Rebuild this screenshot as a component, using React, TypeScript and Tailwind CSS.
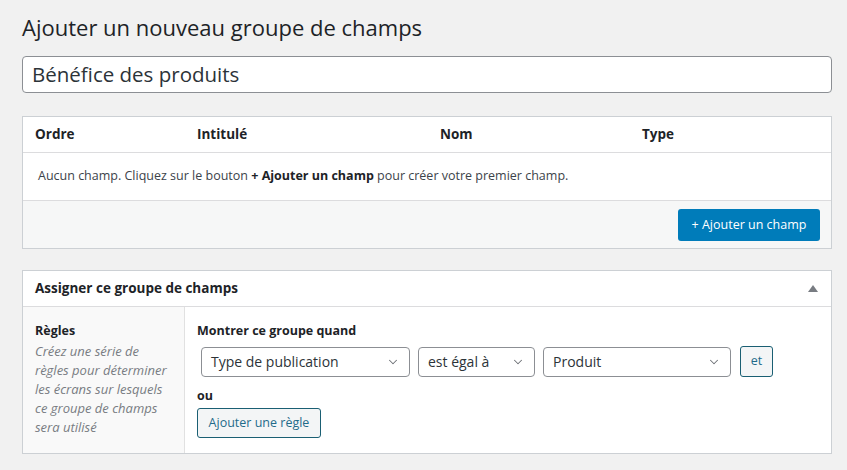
import { ChevronDown } from "lucide-react";

function FakeSelect({ label, width }: { label: string; width: string }) {
  return (
    <div
      className={`${width} h-[30px] flex items-center justify-between pl-[9px] pr-[9px] bg-white border border-[#8c8f94] rounded-[4px] text-[14px] text-[#2c3338]`}
    >
      <span>{label}</span>
      <ChevronDown className="w-[14px] h-[14px] text-[#6c7075]" strokeWidth={1.75} />
    </div>
  );
}

export default function App() {
  return (
    <div className="min-h-screen bg-[#f1f1f1] pl-[22px] pr-[15px] pt-[9px] font-['Open_Sans',sans-serif] text-[#3c434a]">
      <h1 className="text-[22px] leading-[36px] text-[#1d2327]">Ajouter un nouveau groupe de champs</h1>

      {/* Title input */}
      <div className="mt-[11px] h-[37px] flex items-center px-[9px] bg-white border border-[#8c8f94] rounded-[4px] text-[20.5px] text-[#2c3338]">
        Bénéfice des produits
      </div>

      {/* Fields table */}
      <div className="mt-[23px] bg-white border border-[#ccd0d4]">
        <div className="h-[36px] flex items-center border-b border-[#dcdcde] text-[13.5px] font-bold text-[#1d2327]">
          <span className="w-[174px] pl-[12px]">Ordre</span>
          <span className="w-[243px]">Intitulé</span>
          <span className="w-[202px]">Nom</span>
          <span>Type</span>
        </div>
        <div className="h-[48px] flex items-center pl-[15px] border-b border-[#dcdcde] text-[12.5px]">
          <span>
            Aucun champ. Cliquez sur le bouton <strong className="text-[#1d2327]">+ Ajouter un champ</strong> pour créer
            votre premier champ.
          </span>
        </div>
        <div className="flex justify-end bg-[#f6f7f7] pt-[8px] pb-[7px] pr-[11px]">
          <button className="h-[32px] w-[142px] rounded-[3px] bg-[#007cba] text-white text-[12.5px]">
            + Ajouter un champ
          </button>
        </div>
      </div>

      {/* Location postbox */}
      <div className="mt-[21px] bg-white border border-[#ccd0d4]">
        <div className="h-[36px] flex items-center justify-between pl-[12px] pr-[12px] border-b border-[#dcdcde]">
          <span className="text-[13.5px] font-bold text-[#1d2327]">Assigner ce groupe de champs</span>
          <svg width="10" height="7" viewBox="0 0 10 7" className="mr-[1px]">
            <path d="M5 0 L10 7 L0 7 Z" fill="#787c82" />
          </svg>
        </div>
        <div className="flex">
          <div className="w-[162px] shrink-0 bg-[#f9f9f9] border-r border-[#e1e1e1] pl-[12px] pr-[4px] pt-[14px] pb-[16px]">
            <div className="text-[12.5px] font-bold leading-[19px] text-[#1d2327]">Règles</div>
            <p className="mt-[2px] text-[13px] italic leading-[19px] text-[#787c82]">
              Créez une série de
              <br />
              règles pour déterminer
              <br />
              les écrans sur lesquels
              <br />
              ce groupe de champs
              <br />
              sera utilisé
            </p>
          </div>
          <div className="flex-1 pl-[12px] pt-[14px]">
            <div className="text-[12.5px] font-bold leading-[19px] text-[#1d2327]">Montrer ce groupe quand</div>
            <div className="mt-[6px] pl-[4px] flex items-center gap-[8px]">
              <FakeSelect label="Type de publication" width="w-[209px]" />
              <FakeSelect label="est égal à" width="w-[117px]" />
              <FakeSelect label="Produit" width="w-[188px]" />
              <button className="ml-[1px] h-[31px] w-[33px] rounded-[3px] border border-[#1a5f73] bg-[#f3f5f6] text-[12.5px] text-[#1f6b8a]">
                et
              </button>
            </div>
            <div className="mt-[9px] text-[12.5px] font-bold leading-[19px] text-[#1d2327]">ou</div>
            <button className="mt-[3px] h-[30px] w-[124px] rounded-[3px] border border-[#1a5f73] bg-[#f3f5f6] text-[12.5px] text-[#1f6b8a]">
              Ajouter une règle
            </button>
          </div>
        </div>
      </div>
    </div>
  );
}
